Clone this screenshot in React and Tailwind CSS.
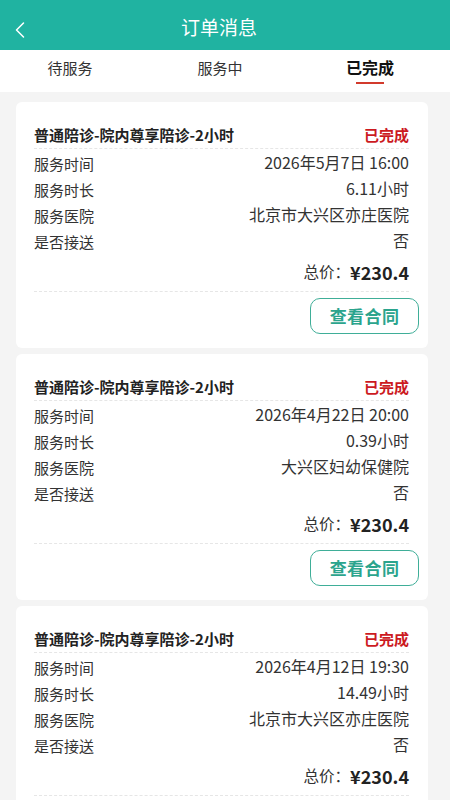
import { ChevronLeft } from 'lucide-react';

const orders = [
    { time: '2026年5月7日 16:00', hours: '6.11小时', hospital: '北京市大兴区亦庄医院', pickup: '否' },
    { time: '2026年4月22日 20:00', hours: '0.39小时', hospital: '大兴区妇幼保健院', pickup: '否' },
    { time: '2026年4月12日 19:30', hours: '14.49小时', hospital: '北京市大兴区亦庄医院', pickup: '否' },
];

function Row({ label, value }) {
    return (
        <div className="flex h-[26px] items-center justify-between text-[#333]">
            <span className="pt-[4px] text-[15px]">{label}</span>
            <span className="text-[16px]">{value}</span>
        </div>
    );
}

function OrderCard({ order }) {
    return (
        <div className="rounded-[6px] bg-white pt-[22px] pb-[14px] pl-[18px] pr-[19px]">
            <div className="box-content flex h-[22px] items-center justify-between border-b border-dashed border-[#e6e6e6] pb-[2px]">
                <span className="text-[15px] font-bold text-[#222]">普通陪诊-院内尊享陪诊-2小时</span>
                <span className="text-[15px] font-bold text-[#cc1a1f]">已完成</span>
            </div>
            <Row label="服务时间" value={order.time} />
            <Row label="服务时长" value={order.hours} />
            <Row label="服务医院" value={order.hospital} />
            <Row label="是否接送" value={order.pickup} />
            <div className="box-content flex h-[38px] items-center justify-end border-b border-dashed border-[#e6e6e6]">
                <span className="text-[15.5px] text-[#333]">总价：</span>
                <span className="text-[18px] font-bold text-[#222]">¥230.4</span>
            </div>
            <div className="mt-[6px] -mr-[10px] flex justify-end">
                <button className="flex h-[36px] w-[109px] items-center justify-center rounded-[10px] border-[1.5px] border-[#3fae98] text-[17px] font-semibold tracking-wide text-[#2ba48d]">
                    查看合同
                </button>
            </div>
        </div>
    );
}

export default function App() {
    return (
        <div
            className="min-h-[800px] w-[450px] overflow-hidden bg-[#f4f4f4]"
            style={{ fontFamily: '"Noto Sans CJK SC", "Noto Sans", sans-serif' }}
        >
            <div className="relative flex h-[50px] items-center justify-center bg-[#20b3a1]">
                <ChevronLeft className="absolute left-[6px] top-[16px] text-white" size={28} strokeWidth={1.3} />
                <span className="mr-[12px] pt-[4px] text-[19px] text-white">订单消息</span>
            </div>

            <div className="flex h-[42px] items-start bg-white pt-[5px] text-[15px] text-[#333]">
                <div className="w-[140px] pt-[2px] text-center">待服务</div>
                <div className="w-[160px] pt-[2px] text-center">服务中</div>
                <div className="relative w-[140px] text-center text-[16px] font-semibold text-[#111]">
                    已完成
                    <div className="absolute left-1/2 top-[27px] h-[2px] w-[28px] -translate-x-1/2 bg-[#d23a2c]" />
                </div>
            </div>

            <div className="flex flex-col gap-[6px] pt-[10px] pl-[16px] pr-[22px]">
                {orders.map((o, i) => (
                    <OrderCard key={i} order={o} />
                ))}
            </div>
        </div>
    );
}
